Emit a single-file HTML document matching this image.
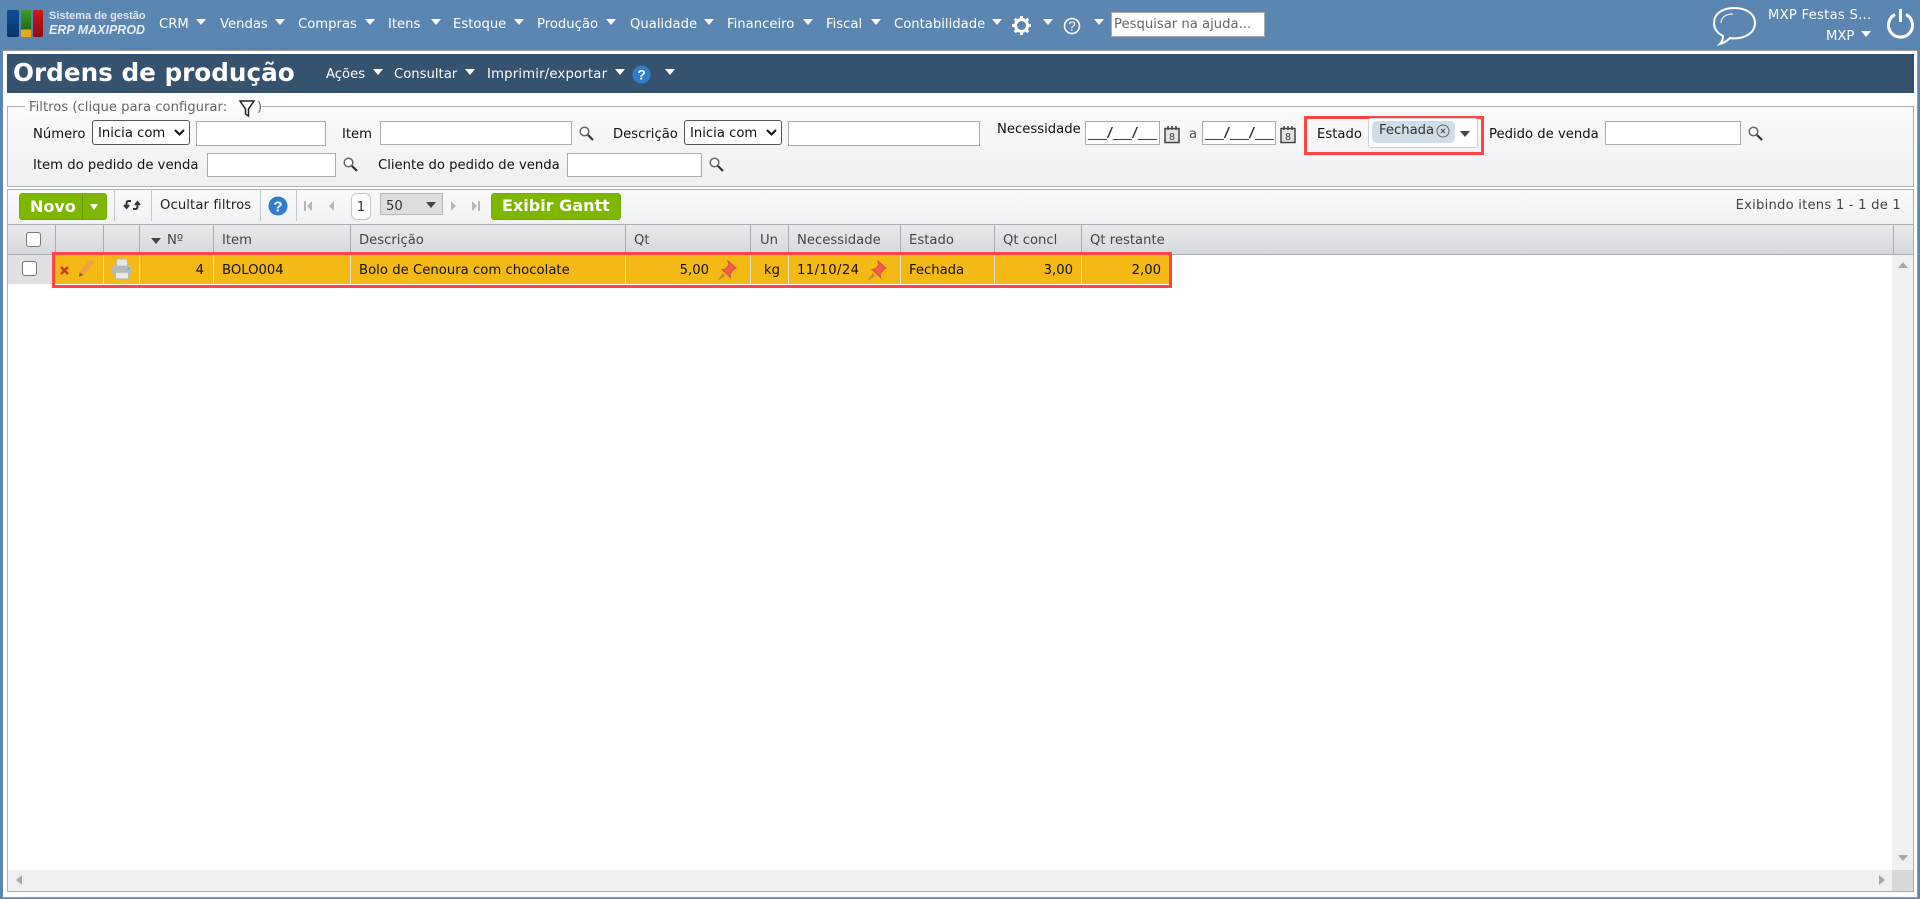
<!DOCTYPE html>
<html lang="pt"><head><meta charset="utf-8"><title>Ordens de produção</title>
<style>
html,body{margin:0;padding:0;width:1920px;height:899px;overflow:hidden;background:#5b86b2}
body{position:relative;font-family:"DejaVu Sans","Liberation Sans",sans-serif;font-size:13.2px;color:#111}
.a,.t,.i,.s{position:absolute;box-sizing:border-box}
.t{white-space:nowrap;line-height:20px;height:20px}
.w{color:#fff}
.r{text-align:right}
.ar{position:absolute;width:0;height:0;border-left:5.500px solid transparent;border-right:5.500px solid transparent;border-top:6px solid #fff}
.i{background:#fff;border:1px solid #aaa}
.s{background:#fff;border:1px solid #555;border-radius:3px;line-height:25px;padding-left:5px;color:#111}
.h{color:#444}
.v{position:absolute;top:224px;width:1px;height:31px;background:#a8adb5}
.c{position:absolute;top:255px;width:1px;height:29px;background:#e6e2d0}
.sp{position:absolute;top:189px;width:1px;height:32px;background:#c4c6ca}
.d span{display:inline-block;transform:scaleX(1.42);transform-origin:0 50%}
svg{position:absolute;overflow:visible}
</style></head><body>
<!-- top bar logo -->
<div class="a" style="left:7px;top:10px;width:12px;height:27px;background:linear-gradient(#0d4f96,#0a3569);border-radius:2px"></div>
<div class="a" style="left:21px;top:10px;width:10px;height:19px;background:linear-gradient(#3f9a2a,#1f6e16)"></div>
<div class="a" style="left:21px;top:30px;width:10px;height:7px;background:#e8a915"></div>
<div class="a" style="left:33px;top:10px;width:10px;height:27px;background:linear-gradient(#d01818,#8e0c0c);border-radius:2px"></div>
<div class="t" style="left:49px;top:6px;font:bold 11px/20px 'Liberation Sans',sans-serif;color:#dfe8f1">Sistema de gestão</div>
<div class="t" style="left:49px;top:20px;font:italic bold 12.500px/20px 'Liberation Sans',sans-serif;color:#e8eef5">ERP MAXIPROD</div>

<div class="t w" style="left:159px;top:15px">CRM</div><div class="ar" style="left:196px;top:19px"></div>
<div class="t w" style="left:220px;top:15px">Vendas</div><div class="ar" style="left:275px;top:19px"></div>
<div class="t w" style="left:298px;top:15px">Compras</div><div class="ar" style="left:365px;top:19px"></div>
<div class="t w" style="left:388px;top:15px">Itens</div><div class="ar" style="left:431px;top:19px"></div>
<div class="t w" style="left:453px;top:15px">Estoque</div><div class="ar" style="left:514px;top:19px"></div>
<div class="t w" style="left:537px;top:15px">Produção</div><div class="ar" style="left:606px;top:19px"></div>
<div class="t w" style="left:630px;top:15px">Qualidade</div><div class="ar" style="left:704px;top:19px"></div>
<div class="t w" style="left:727px;top:15px">Financeiro</div><div class="ar" style="left:803px;top:19px"></div>
<div class="t w" style="left:826px;top:15px">Fiscal</div><div class="ar" style="left:871px;top:19px"></div>
<div class="t w" style="left:894px;top:15px">Contabilidade</div><div class="ar" style="left:992px;top:19px"></div>
<svg style="left:1012px;top:16px" width="19" height="19" viewBox="0 0 19 19"><circle cx="9.500" cy="9.500" r="6" fill="none" stroke="#fff" stroke-width="3"/><g stroke="#fff" stroke-width="3"><path d="M9.500 0v4M9.500 15v4M0 9.500h4M15 9.500h4M2.800 2.800l2.800 2.800M13.400 13.400l2.800 2.800M2.800 16.200l2.800-2.800M13.400 5.600l2.800-2.800"/></g></svg>
<div class="ar" style="left:1043px;top:19px"></div>
<svg style="left:1063px;top:17px" width="18" height="18" viewBox="0 0 18 18"><circle cx="9" cy="9" r="7.500" fill="none" stroke="#fff" stroke-width="1.600"/><text x="9" y="13.500" text-anchor="middle" font-family="Liberation Sans" font-size="13" fill="#fff">?</text></svg>
<div class="ar" style="left:1094px;top:19px"></div>
<div class="a" style="left:1111px;top:12px;width:154px;height:25px;background:#fff;border:1px solid #aaa;color:#666;line-height:24px;padding-left:2px;white-space:nowrap">Pesquisar na ajuda...</div>

<svg style="left:1712px;top:6px" width="45" height="40" viewBox="0 0 45 40"><path d="M22 2C10 2 2 8 2 17c0 6 3 10 9 13 0 3-1 6-3 8 4-1 7-3 10-6 2 .4 3 .4 4 .4 12 0 21-6 21-15.400S34 2 22 2z" fill="none" stroke="#fff" stroke-width="2"/><path d="M9 17c0-5 4-9 12-9" fill="none" stroke="#e8eef5" stroke-width="1.200"/></svg>
<div class="t w" style="left:1768px;top:6px;letter-spacing:.25px">MXP Festas S...</div>
<div class="t w" style="left:1826px;top:27px">MXP</div><div class="ar" style="left:1861px;top:31px"></div>
<svg style="left:1886px;top:8px" width="29" height="29" viewBox="0 0 29 29"><path d="M9 6.500A12 12 0 1 0 20 6.500" fill="none" stroke="#fff" stroke-width="3"/><path d="M14.500 1v13" stroke="#fff" stroke-width="3"/></svg>

<!-- page panel -->
<div class="a" style="left:3px;top:50px;width:1915px;height:848px;background:#fff;border:1px solid #9a9a9a;border-left:0"></div>
<div class="a" style="left:7px;top:54px;width:1907px;height:39px;background:#35526f"></div>
<div class="t w" style="left:13px;top:60px;font-size:24.700px;font-weight:bold;line-height:26px;height:26px">Ordens de produção</div>
<div class="t w" style="left:326px;top:65px">Ações</div><div class="ar" style="left:373px;top:69px"></div>
<div class="t w" style="left:394px;top:65px">Consultar</div><div class="ar" style="left:465px;top:69px"></div>
<div class="t w" style="left:487px;top:65px;letter-spacing:.2px">Imprimir/exportar</div><div class="ar" style="left:615px;top:69px"></div>
<svg style="left:632px;top:65px" width="19" height="19" viewBox="0 0 19 19"><circle cx="9.500" cy="9.500" r="9" fill="#2f7dcd"/><text x="9.500" y="14.500" text-anchor="middle" font-family="Liberation Sans" font-weight="bold" font-size="14" fill="#fff">?</text></svg>
<div class="ar" style="left:665px;top:69px"></div>

<!-- filters -->
<div class="a" style="left:7px;top:106px;width:1907px;height:81px;border:1px solid #aaadb2;background:linear-gradient(#fafafb,#eff0f2)"></div>
<div class="a" style="left:25px;top:99px;width:237px;height:14px;background:linear-gradient(#fff 50%,#fafafb 50%)"></div>
<div class="t" style="left:29px;top:98px;color:#666">Filtros (clique para configurar:</div>
<div class="t" style="left:257px;top:98px;color:#666">)</div>
<svg style="left:239px;top:100px" width="16" height="17" viewBox="0 0 16 17"><path d="M1 1h14L9.500 9v7l-3-2V9z" fill="none" stroke="#222" stroke-width="1.500"/></svg>

<div class="t" style="left:33px;top:125px">Número</div>
<div class="s" style="left:92px;top:120px;width:98px;height:25px">Inicia com</div>
<svg style="left:174px;top:129px" width="11" height="8"><path d="M1 1l4.500 4.500L10 1" fill="none" stroke="#111" stroke-width="2"/></svg>
<div class="i" style="left:196px;top:121px;width:130px;height:25px"></div>
<div class="t" style="left:342px;top:125px">Item</div>
<div class="i" style="left:380px;top:121px;width:192px;height:24px"></div>
<svg class="lens" style="left:579px;top:126px" width="15" height="15" viewBox="0 0 15 15"><circle cx="5.500" cy="5.500" r="4.300" fill="#fff" stroke="#666" stroke-width="1.500"/><path d="M9 9l5 5" stroke="#333" stroke-width="2.200"/></svg>
<div class="t" style="left:613px;top:125px">Descrição</div>
<div class="s" style="left:684px;top:120px;width:98px;height:25px">Inicia com</div>
<svg style="left:766px;top:129px" width="11" height="8"><path d="M1 1l4.500 4.500L10 1" fill="none" stroke="#111" stroke-width="2"/></svg>
<div class="i" style="left:788px;top:121px;width:192px;height:25px"></div>
<div class="t" style="left:997px;top:120px">Necessidade</div>
<div class="i d" style="left:1085px;top:121px;width:75px;height:24px;line-height:23px;padding-left:2px;color:#333"><span>__/__/__</span></div>
<svg style="left:1164px;top:126px" width="16" height="17" viewBox="0 0 16 17"><rect x="1" y="2.500" width="14" height="14" fill="#e4e4e4" stroke="#444" stroke-width="1.500"/><path d="M4 0v4M8 0v4M12 0v4" stroke="#444" stroke-width="1.500"/><text x="8" y="14" text-anchor="middle" font-family="Liberation Sans" font-size="10" fill="#333">8</text></svg>
<div class="t" style="left:1189px;top:125px;color:#555">a</div>
<div class="i d" style="left:1202px;top:121px;width:74px;height:24px;line-height:23px;padding-left:2px;color:#333"><span>__/__/__</span></div>
<svg style="left:1280px;top:126px" width="16" height="17" viewBox="0 0 16 17"><rect x="1" y="2.500" width="14" height="14" fill="#e4e4e4" stroke="#444" stroke-width="1.500"/><path d="M4 0v4M8 0v4M12 0v4" stroke="#444" stroke-width="1.500"/><text x="8" y="14" text-anchor="middle" font-family="Liberation Sans" font-size="10" fill="#333">8</text></svg>

<div class="a" style="left:1304px;top:116px;width:180px;height:39px;border:3px solid #ff4444"></div>
<div class="t" style="left:1317px;top:125px">Estado</div>
<div class="a" style="left:1368px;top:118px;width:110px;height:30px;background:#fff;border:1px solid #ccd2d8;border-radius:3px"></div>
<div class="a" style="left:1372px;top:121px;width:83px;height:22px;background:#d0dce8;border-radius:5px"></div>
<div class="t" style="left:1379px;top:121px;color:#333">Fechada</div>
<svg style="left:1436px;top:124px" width="14" height="14" viewBox="0 0 14 14"><circle cx="7" cy="7" r="6" fill="none" stroke="#666" stroke-width="1"/><path d="M5 5l4 4M9 5l-4 4" stroke="#555" stroke-width="1.200"/></svg>
<div class="ar" style="left:1460px;top:131px;border-top-color:#444"></div>
<div class="t" style="left:1489px;top:125px">Pedido de venda</div>
<div class="i" style="left:1605px;top:121px;width:136px;height:24px"></div>
<svg style="left:1748px;top:126px" width="15" height="15" viewBox="0 0 15 15"><circle cx="5.500" cy="5.500" r="4.300" fill="#fff" stroke="#666" stroke-width="1.500"/><path d="M9 9l5 5" stroke="#333" stroke-width="2.200"/></svg>

<div class="t" style="left:33px;top:156px">Item do pedido de venda</div>
<div class="i" style="left:207px;top:153px;width:129px;height:24px"></div>
<svg style="left:343px;top:157px" width="15" height="15" viewBox="0 0 15 15"><circle cx="5.500" cy="5.500" r="4.300" fill="#fff" stroke="#666" stroke-width="1.500"/><path d="M9 9l5 5" stroke="#333" stroke-width="2.200"/></svg>
<div class="t" style="left:378px;top:156px">Cliente do pedido de venda</div>
<div class="i" style="left:567px;top:153px;width:135px;height:24px"></div>
<svg style="left:709px;top:157px" width="15" height="15" viewBox="0 0 15 15"><circle cx="5.500" cy="5.500" r="4.300" fill="#fff" stroke="#666" stroke-width="1.500"/><path d="M9 9l5 5" stroke="#333" stroke-width="2.200"/></svg>

<!-- grid frame -->
<div class="a" style="left:7px;top:189px;width:1907px;height:703px;border:1px solid #aaadb2;background:#fff"></div>
<!-- toolbar -->
<div class="a" style="left:8px;top:190px;width:1905px;height:34px;background:linear-gradient(#fafafb,#f0f1f3)"></div>
<div class="a" style="left:19px;top:193px;width:88px;height:27px;background:#7db700;border-radius:3px;border:1px solid #76a90a"></div>
<div class="a" style="left:82px;top:194px;width:1px;height:25px;background:#669a08"></div>
<div class="t w" style="left:30px;top:197px;font-weight:bold;font-size:16px">Novo</div>
<div class="ar" style="left:90px;top:204px;border-left-width:4px;border-right-width:4px"></div>
<div class="sp" style="left:114px"></div><div class="sp" style="left:151px"></div><div class="sp" style="left:260px"></div><div class="sp" style="left:296px"></div>
<svg style="left:124px;top:198px" width="16" height="14" viewBox="0 0 16 14"><path d="M7 3H4.500C3 3 2.500 4 2.500 6v3M0 7l2.500 3L5 7" fill="none" stroke="#333" stroke-width="2"/><path d="M9 11h2.500c1.500 0 2-1 2-3V5M11 7l2.500-3L16 7" fill="none" stroke="#333" stroke-width="2"/></svg>
<div class="t" style="left:160px;top:196px;color:#222;letter-spacing:.1px">Ocultar filtros</div>
<svg style="left:268px;top:196px" width="20" height="20" viewBox="0 0 20 20"><circle cx="10" cy="10" r="9.500" fill="#2f7dcd"/><text x="10" y="15.500" text-anchor="middle" font-family="Liberation Sans" font-weight="bold" font-size="15" fill="#fff">?</text></svg>
<svg style="left:304px;top:200px" width="8" height="12"><path d="M0 1h2v10H0zM8 1v10L3 6z" fill="#b5b7ba"/></svg>
<svg style="left:328px;top:200px" width="7" height="12"><path d="M6 1v10L1 6z" fill="#b5b7ba"/></svg>
<div class="a" style="left:351px;top:193px;width:20px;height:27px;background:#fff;border:1px solid #c4c6ca;border-radius:6px;text-align:center;line-height:27px;color:#333">1</div>
<div class="a" style="left:380px;top:193px;width:63px;height:22px;background:#dcdee0;border:1px solid #b5b7ba;line-height:26px;padding-left:5px;color:#333">50</div>
<div class="ar" style="left:426px;top:202px;border-top-color:#444"></div>
<svg style="left:450px;top:200px" width="7" height="12"><path d="M1 1v10l5-5z" fill="#b5b7ba"/></svg>
<svg style="left:472px;top:200px" width="8" height="12"><path d="M0 1v10l5-5zM6 1h2v10H6z" fill="#b5b7ba"/></svg>
<div class="a" style="left:491px;top:193px;width:130px;height:27px;background:#7db700;border-radius:3px;border:1px solid #76a90a"></div>
<div class="t w" style="left:502px;top:196px;font-weight:bold;font-size:16px">Exibir Gantt</div>
<div class="t h r" style="left:1601px;top:196px;width:300px;letter-spacing:.2px">Exibindo itens 1 - 1 de 1</div>

<!-- header -->
<div class="a" style="left:8px;top:224px;width:1905px;height:31px;background:linear-gradient(#e9eaec,#d5d8db);border-top:1px solid #a8adb5;border-bottom:1px solid #a8adb5"></div>
<div class="v" style="left:55px"></div><div class="v" style="left:103px"></div><div class="v" style="left:139px"></div><div class="v" style="left:213px"></div><div class="v" style="left:350px"></div><div class="v" style="left:625px"></div><div class="v" style="left:750px"></div><div class="v" style="left:788px"></div><div class="v" style="left:900px"></div><div class="v" style="left:994px"></div><div class="v" style="left:1081px"></div><div class="v" style="left:1893px"></div>
<div class="a" style="left:26px;top:232px;width:15px;height:15px;background:#fff;border:1px solid #777;border-radius:3px"></div>
<div class="ar" style="left:151px;top:238px;border-top-color:#444"></div>
<div class="t h" style="left:167px;top:231px">Nº</div>
<div class="t h" style="left:222px;top:231px">Item</div>
<div class="t h" style="left:359px;top:231px">Descrição</div>
<div class="t h" style="left:634px;top:231px">Qt</div>
<div class="t h" style="left:760px;top:231px">Un</div>
<div class="t h" style="left:797px;top:231px">Necessidade</div>
<div class="t h" style="left:909px;top:231px">Estado</div>
<div class="t h" style="left:1003px;top:231px">Qt concl</div>
<div class="t h" style="left:1090px;top:231px">Qt restante</div>

<!-- row -->
<div class="a" style="left:8px;top:255px;width:47px;height:29px;background:#dfe1e4"></div>
<div class="a" style="left:22px;top:261px;width:15px;height:15px;background:#fff;border:1px solid #777;border-radius:3px"></div>
<div class="a" style="left:55px;top:255px;width:1115px;height:29px;background:#f5b915"></div>
<div class="c" style="left:103px"></div><div class="c" style="left:139px"></div><div class="c" style="left:213px"></div><div class="c" style="left:350px"></div><div class="c" style="left:625px"></div><div class="c" style="left:750px"></div><div class="c" style="left:788px"></div><div class="c" style="left:900px"></div><div class="c" style="left:994px"></div><div class="c" style="left:1081px"></div>
<svg style="left:60px;top:266px" width="9" height="9"><path d="M1 1l7 7M8 1L1 8" stroke="#c33" stroke-width="2.500"/></svg>
<svg style="left:77px;top:259px" width="18" height="20" viewBox="0 0 18 20"><path d="M15 2L4 15" stroke="#eca040" stroke-width="5"/><path d="M2 18l.6-4.500 3.600 2.600z" fill="#7a5a30"/></svg>
<svg style="left:111px;top:258px" width="22" height="22" viewBox="0 0 20 20"><rect x="5" y="1" width="10" height="7" rx="1" fill="#e4e7e7" stroke="#b0b4b4" stroke-width=".8"/><rect x="1" y="7" width="18" height="8" rx="2.500" fill="#b4babd"/><rect x="4" y="13" width="12" height="6" rx="1" fill="#e9ebeb" stroke="#b0b4b4" stroke-width=".8"/><circle cx="16" cy="9.500" r="1" fill="#5b5"/></svg>
<div class="t r" style="left:144px;top:261px;width:60px">4</div>
<div class="t" style="left:222px;top:261px">BOLO004</div>
<div class="t" style="left:359px;top:261px;letter-spacing:.03px">Bolo de Cenoura com chocolate</div>
<div class="t r" style="left:649px;top:261px;width:60px">5,00</div>
<svg style="left:715px;top:260px" width="22" height="22" viewBox="0 0 22 22"><path d="M13 1l8 7-2.500 1.500L15 14l.5 3.500L7 9.500l3.500-.5L14 5z" fill="#ee5f4f" stroke="#e8483c" stroke-width="1"/><path d="M8 13l-6 8 8-5z" fill="#b98a3a"/></svg>
<div class="t" style="left:764px;top:261px">kg</div>
<div class="t" style="left:797px;top:261px;letter-spacing:.4px">11/10/24</div>
<svg style="left:865px;top:260px" width="22" height="22" viewBox="0 0 22 22"><path d="M13 1l8 7-2.500 1.500L15 14l.5 3.500L7 9.500l3.500-.5L14 5z" fill="#ee5f4f" stroke="#e8483c" stroke-width="1"/><path d="M8 13l-6 8 8-5z" fill="#b98a3a"/></svg>
<div class="t" style="left:909px;top:261px">Fechada</div>
<div class="t r" style="left:1013px;top:261px;width:60px">3,00</div>
<div class="t r" style="left:1101px;top:261px;width:60px">2,00</div>
<div class="a" style="left:52px;top:252px;width:1120px;height:36px;border:3px solid #ff4444"></div>

<!-- scrollbars -->
<div class="a" style="left:1892px;top:255px;width:21px;height:615px;background:#f0f0f0"></div>
<div class="a" style="left:8px;top:870px;width:1884px;height:21px;background:#f0f0f0"></div>
<div class="a" style="left:1892px;top:870px;width:21px;height:21px;background:#d8d8d8"></div>
<svg style="left:1898px;top:262px" width="10" height="6"><path d="M0 6h10L5 0z" fill="#a8a8a8"/></svg>
<svg style="left:1898px;top:855px" width="10" height="6"><path d="M0 0h10L5 6z" fill="#a8a8a8"/></svg>
<svg style="left:16px;top:875px" width="6" height="10"><path d="M6 0v10L0 5z" fill="#a8a8a8"/></svg>
<svg style="left:1879px;top:875px" width="6" height="10"><path d="M0 0v10l6-5z" fill="#a8a8a8"/></svg>
</body></html>
